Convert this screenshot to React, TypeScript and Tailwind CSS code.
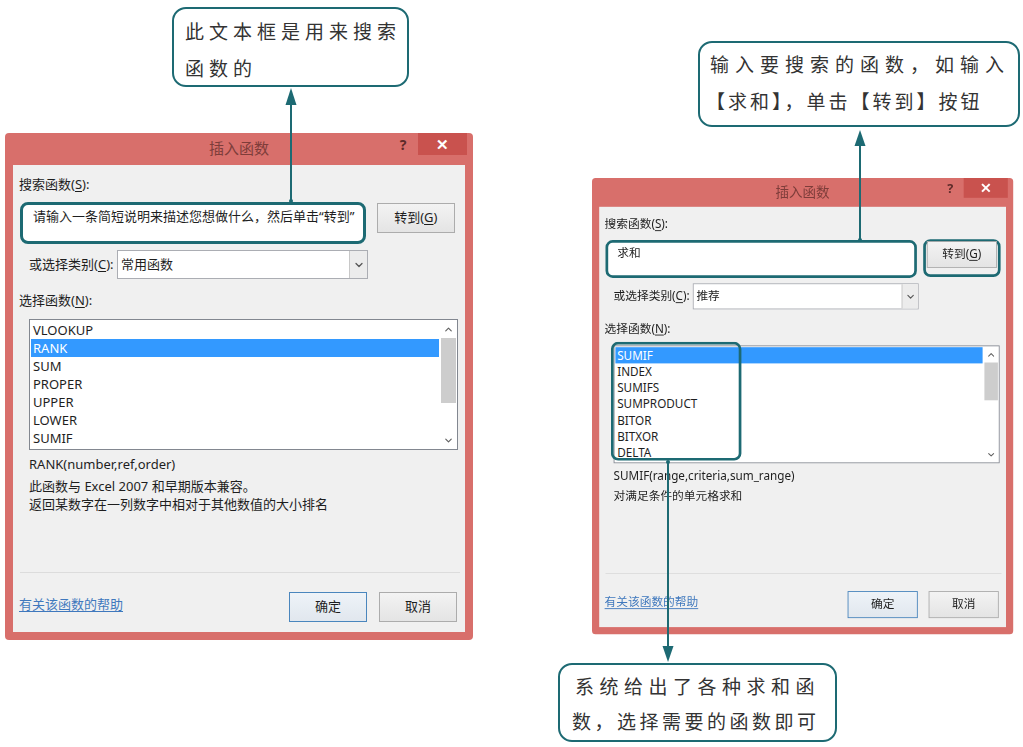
import { ChevronDown, ChevronUp } from "lucide-react";

type DialogProps = {
  query: string;
  category: string;
  items: string[];
  selected: number;
  signature: string;
  desc: string[];
  thumb: string;
  hlGo?: boolean;
  hlList?: boolean;
};

// underlined access key, like (S) (C) (N) (G)
const Key = ({ k }: { k: string }) => (
  <span className="underline underline-offset-2">{k}</span>
);

const WinButton = ({
  children,
  primary,
}: {
  children: React.ReactNode;
  primary?: boolean;
}) => (
  <div
    className={
      primary
        ? "flex justify-center items-center bg-gradient-to-b from-[#eef3f8] to-[#e1e7ee] border border-[#4a86bd] w-[78px] h-[30px]"
        : "flex justify-center items-center bg-gradient-to-b from-[#f3f3f3] to-[#e4e4e4] border border-[#acacac] w-[78px] h-[30px]"
    }
  >
    {children}
  </div>
);

const InsertFunctionDialog = ({
  query,
  category,
  items,
  selected,
  signature,
  desc,
  thumb,
  hlGo,
  hlList,
}: DialogProps) => {
  return (
    <div className="flex flex-col bg-[#d86f6b] rounded-[4px] w-[468px] h-[507px] font-['Noto_Sans','Noto_Sans_CJK_SC',sans-serif] text-[#1e1e1e] text-[13px]">
      {/* title bar */}
      <div className="grid grid-cols-[1fr_auto_1fr] h-[32px]">
        <div />
        <div className="pt-[4px] text-[#7e3d3a] text-[15px] leading-[22px]">
          插入函数
        </div>
        <div className="flex justify-end items-start">
          <div className="flex justify-center items-center mr-[8px] w-[14px] h-[22px] font-bold text-[#5e2b29] text-[14px]">
            ?
          </div>
          <div className="flex justify-center items-center bg-[#c9524e] mr-[6px] w-[49px] h-[22px] font-bold text-[15px] text-white">
            ✕
          </div>
        </div>
      </div>

      {/* client area */}
      <div className="flex flex-col bg-[#f0f0f0] mx-[8px] px-[6px] h-[467px]">
        <div className="pt-[10px] leading-[18px]">
          搜索函数(<Key k="S" />):
        </div>

        <div className="flex items-start mt-[9px]">
          <div className="bg-white pt-[2px] pl-[10px] border-[#1d6a73] border-[3px] rounded-[8px] ml-px w-[349px] h-[42px] leading-[18px]">
            {query}
          </div>
          <div
            className={
              hlGo
                ? "border-[3px] border-[#1d6a73] rounded-[8px] -mt-px ml-[7px] w-[87px] h-[42px]"
                : "border-[3px] border-transparent rounded-[8px] -mt-px ml-[7px] w-[87px] h-[42px]"
            }
          >
            <div className="-mt-px ml-px">
              <WinButton>
                转到(<Key k="G" />)
              </WinButton>
            </div>
          </div>
        </div>

        <div className="flex items-center mt-[6px] ml-[10px] h-[29px]">
          <div className="w-[88px]">
            或选择类别(<Key k="C" />):
          </div>
          <div className="flex bg-white border border-[#abadb3] w-[251px] h-[29px]">
            <div className="flex flex-1 items-center pl-[3px]">{category}</div>
            <div className="flex justify-center items-center bg-[#ececec] border-[#c8c8c8] border-l w-[18px]">
              <ChevronDown size={12} strokeWidth={2.5} color="#555" />
            </div>
          </div>
        </div>

        <div className="mt-[12px] leading-[18px]">
          选择函数(<Key k="N" />):
        </div>

        <div className="relative flex bg-white mt-[10px] ml-[10px] border border-[#828790] w-[429px] h-[131px]">
          <div className="flex-1 pt-px pl-px">
            {items.map((name, i) => (
              <div
                key={name}
                className={
                  i === selected
                    ? "bg-[#3399ff] pl-[2px] h-[18px] text-white leading-[18px]"
                    : "pl-[2px] h-[18px] leading-[18px]"
                }
              >
                {name}
              </div>
            ))}
          </div>
          <div className="flex flex-col ml-px w-[17px]">
            <div className="flex justify-center items-center h-[18px]">
              <ChevronUp size={11} strokeWidth={2.5} color="#606060" />
            </div>
            <div className="flex-1">
              <div className={`bg-[#cdcdcd] mx-[1px] ${thumb}`} />
            </div>
            <div className="flex justify-center items-center h-[18px]">
              <ChevronDown size={11} strokeWidth={2.5} color="#606060" />
            </div>
          </div>
          {hlList && (
            <div className="top-[-5px] left-[-4px] absolute border-[#1d6a73] border-[3px] rounded-[8px] w-[145px] h-[132px]" />
          )}
        </div>

        <div className="pt-[5px] pl-[10px] h-[122px] leading-[18px]">
          <div>{signature}</div>
          <div className="mt-[4px]">
            {desc.map((line) => (
              <div key={line}>{line}</div>
            ))}
          </div>
        </div>

        <div className="bg-[#dcdcdc] ml-px w-[440px] h-px" />

        <div className="flex items-start mt-[19px] h-[30px]">
          <div className="mt-[3px] text-[#3f78bd] underline underline-offset-2 leading-[18px]">
            有关该函数的帮助
          </div>
          <div className="flex gap-[12px] mr-[2px] ml-auto">
            <WinButton primary>确定</WinButton>
            <WinButton>取消</WinButton>
          </div>
        </div>
      </div>
    </div>
  );
};

const Callout = ({
  className,
  children,
}: {
  className: string;
  children: React.ReactNode;
}) => (
  <div
    className={`absolute bg-white border-2 border-[#1d6a73] rounded-[14px] font-['Noto_Sans_CJK_SC',sans-serif] text-[#333] text-[19px] ${className}`}
  >
    {children}
  </div>
);

export default function App() {
  return (
    <div className="relative bg-white w-[1023px] h-[747px] overflow-hidden">
      <div className="flex items-start">
        <div className="mt-[133px] ml-[5px] shrink-0">
          <InsertFunctionDialog
            query={"请输入一条简短说明来描述您想做什么，然后单击“转到”"}
            category="常用函数"
            items={["VLOOKUP", "RANK", "SUM", "PROPER", "UPPER", "LOWER", "SUMIF"]}
            selected={1}
            signature="RANK(number,ref,order)"
            desc={[
              "此函数与 Excel 2007 和早期版本兼容。",
              "返回某数字在一列数字中相对于其他数值的大小排名",
            ]}
            thumb="h-[65px]"
          />
        </div>
        <div className="origin-top-left scale-90 mt-[178px] ml-[119px] shrink-0">
          <InsertFunctionDialog
            query="求和"
            category="推荐"
            items={["SUMIF", "INDEX", "SUMIFS", "SUMPRODUCT", "BITOR", "BITXOR", "DELTA"]}
            selected={0}
            signature="SUMIF(range,criteria,sum_range)"
            desc={["对满足条件的单元格求和"]}
            thumb="h-[42px]"
            hlGo
            hlList
          />
        </div>
      </div>

      {/* annotation arrows */}
      <svg
        className="top-0 left-0 absolute pointer-events-none"
        width="1023"
        height="747"
        viewBox="0 0 1023 747"
      >
        <g stroke="#1d6a73" strokeWidth="2" fill="#1d6a73">
          <line x1="291" y1="102" x2="291" y2="201" />
          <polygon points="291,88 285.5,105 296.5,105" stroke="none" />
          <circle cx="291" cy="201" r="2" stroke="none" />

          <line x1="860" y1="143" x2="860" y2="240" />
          <polygon points="860,130 854.5,146 865.5,146" stroke="none" />
          <circle cx="860" cy="240" r="2" stroke="none" />

          <line x1="668" y1="462" x2="668" y2="649" />
          <polygon points="668,662 662.5,646 673.5,646" stroke="none" />
          <circle cx="668" cy="462" r="2" stroke="none" />
        </g>
      </svg>

      <Callout className="top-[7px] left-[172px] w-[237px] h-[80px] pt-[3px] pl-[11px] leading-[37px] tracking-[5px]">
        <div>此文本框是用来搜索</div>
        <div>函数的</div>
      </Callout>

      <Callout className="top-[41px] left-[698px] w-[322px] h-[86px] pt-[2px] pl-[10px] leading-[37px]">
        <div className="tracking-[6px]">输入要搜索的函数，如输入</div>
        <div className="-ml-[4px] tracking-[3px]">【求和】，单击【转到】按钮</div>
      </Callout>

      <Callout className="top-[663px] left-[558px] w-[279px] h-[79px] pt-[3px] pl-[15px] leading-[35px]">
        <div className="tracking-[5.5px]">系统给出了各种求和函</div>
        <div className="-ml-[3px] tracking-[3.5px]">数，选择需要的函数即可</div>
      </Callout>
    </div>
  );
}
